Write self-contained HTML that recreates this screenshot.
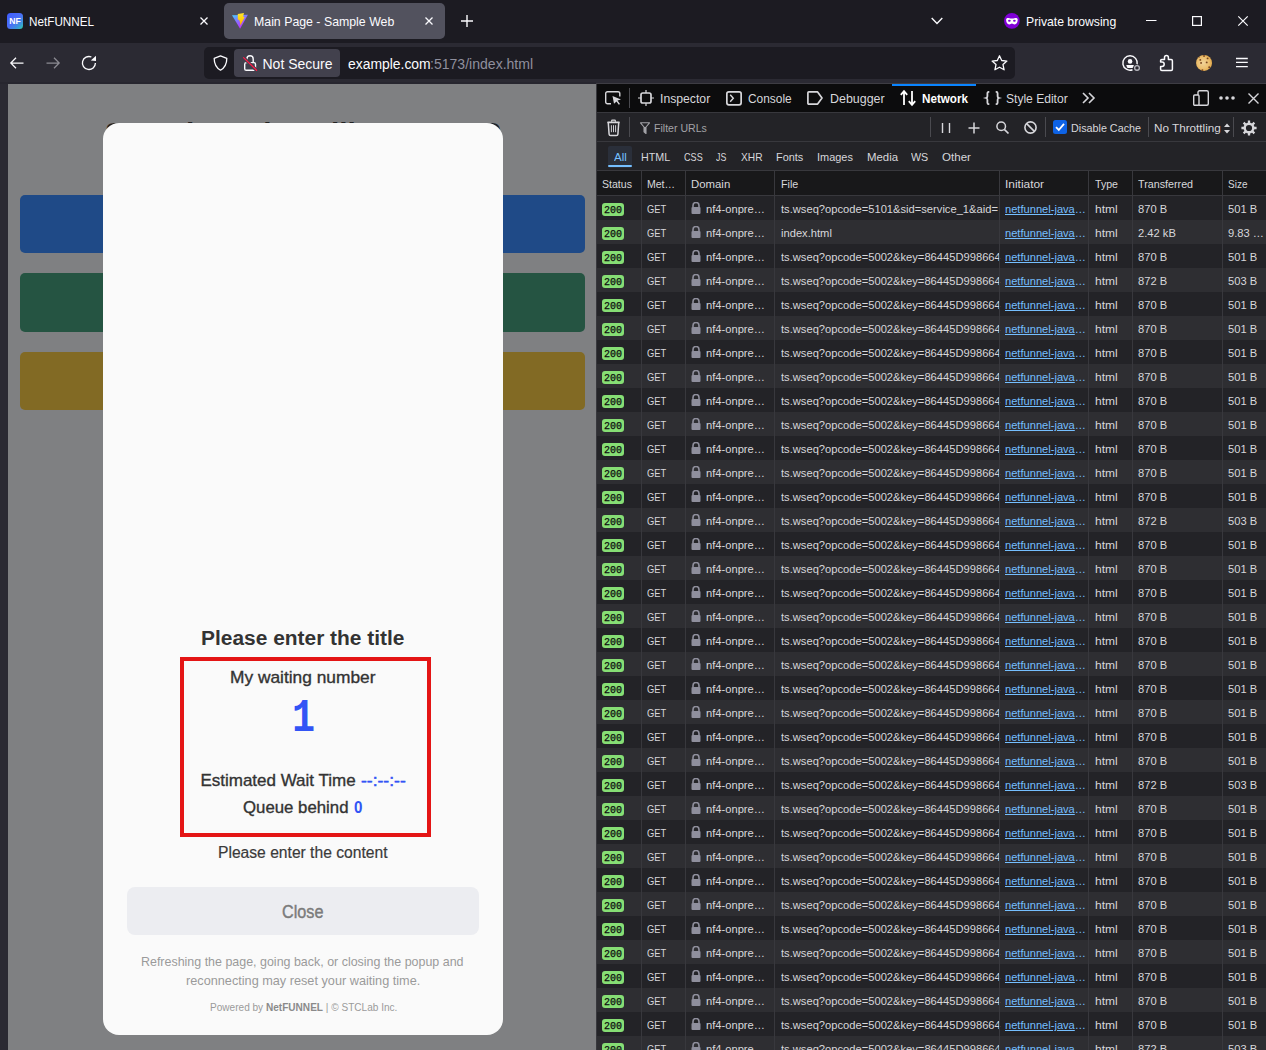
<!DOCTYPE html>
<html><head><meta charset="utf-8">
<style>
*{margin:0;padding:0;box-sizing:border-box}
html,body{width:1266px;height:1050px;overflow:hidden;background:#1c1b22;font-family:"Liberation Sans",sans-serif}
.a{position:absolute}
.t{position:absolute;white-space:nowrap;line-height:1;transform-origin:0 0;z-index:5}
svg.a{overflow:visible;z-index:4}
/* chrome */
#tabs{left:0;top:0;width:1266px;height:43px;background:#1c1b22}
#nav{left:0;top:43px;width:1266px;height:41px;background:#2b2a33}
#leftedge{left:0;top:84px;width:8px;height:966px;background:#2b2a33}
.seltab{left:224px;top:3px;width:221px;height:36px;background:#52525e;border-radius:5px}
#url{left:204px;top:47px;width:811px;height:32px;background:#1c1b22;border-radius:5px}
#chip{left:234px;top:49px;width:106px;height:28px;background:#42414d;border-radius:4px}
/* viewport */
#vp{left:8px;top:84px;width:588px;height:966px;background:#7f8082;overflow:hidden}
.pbtn{position:absolute;left:12px;width:565px;height:58px;border-radius:5px}
#modal{left:95px;top:39px;width:400px;height:912px;background:#fafafa;border-radius:16px}
#redbox{left:180px;top:657px;width:251px;height:180px;border:4px solid #e41515;z-index:3}
#closebtn{left:127px;top:887px;width:352px;height:48px;background:#ecedf1;border-radius:8px}
#hiddenh{left:97px;top:33.5px;font:bold 32px/1 "Liberation Sans";color:#222;white-space:nowrap;transform:scaleX(0.93);transform-origin:0 0}
/* devtools */
#dt{left:596px;top:84px;width:670px;height:966px;background:#1c1b22;overflow:hidden}
#dt .bl{left:0;top:0;width:1px;height:966px;background:#38383d}
#tb1{left:1px;top:0;width:669px;height:28px;background:#0c0c0d}
#tb2{left:1px;top:28px;width:669px;height:29px;background:#232327;border-top:1px solid #38383d}
#tb3{left:1px;top:57px;width:669px;height:29px;background:#232327;border-top:1px solid #38383d}
#hdr{left:1px;top:86px;width:669px;height:26px;background:#18181a;border-top:1px solid #38383d;border-bottom:1px solid #38383d}
#selline{left:892px;top:84px;width:84px;height:2px;background:#0a84ff;z-index:3}
#allbtn{left:608px;top:146px;width:24px;height:22px;background:#2a2f3a;border-radius:2px}
#allline{left:608px;top:165px;width:24px;height:2px;background:#75bfff;border-radius:1px}
.vd{position:absolute;width:1px;background:#4a4a4f}
.r{position:absolute;left:597px;width:669px;height:24px;overflow:hidden}
.odd{background:#232327}
.even{background:#2e2e32}
.r .c{position:absolute;top:6.2px;font-size:11px;line-height:14px;color:#d7d7db;white-space:nowrap;transform-origin:0 0}
.badge{position:absolute;left:5px;top:7px;width:22px;height:13px;background:#86de74;border-radius:3px;font:normal 10px/15px "Liberation Mono",monospace;color:#0c0c0d;-webkit-text-stroke:0.25px #0c0c0d;text-align:center}
.met{left:50px;transform:scaleX(.85)}
.lock{position:absolute;left:94px;top:6px;width:10px;height:12px}
.dom{left:109px;transform:scaleX(1.015)}
.file{left:184px;width:216px;overflow:hidden;transform:scaleX(1.015)}
.init{left:408px;color:#75bfff!important;transform:scaleX(1.01)}.init u{text-decoration:underline}
.typ{left:498px;transform:scaleX(1.09)}
.trn{left:541px;transform:scaleX(1.015)}
.siz{left:631px;transform:scaleX(1.015)}
.coldiv{position:absolute;top:171px;width:1px;height:879px;background:#38383d;z-index:2}
</style></head><body>
<div id="tabs" class="a"></div>
<div class="a seltab"></div>
<div id="nav" class="a"></div>
<div id="url" class="a"></div>
<div id="chip" class="a"></div>
<div id="leftedge" class="a"></div>
<div class="a" style="left:0;top:82px;width:596px;height:2px;background:#27262f"></div>
<div class="a" style="left:596px;top:83px;width:670px;height:1px;background:#3e3d44"></div>

<!-- tab icons -->
<svg class="a" style="left:7px;top:13px" width="16" height="16" viewBox="0 0 16 16">
  <defs><linearGradient id="nfg" x1="0" y1="0" x2="1" y2="1"><stop offset="0" stop-color="#3f5cff"/><stop offset="0.5" stop-color="#4a6ff5"/><stop offset="0.8" stop-color="#3a9ad8"/><stop offset="1" stop-color="#30d6a0"/></linearGradient></defs>
  <rect width="16" height="16" rx="3.5" fill="url(#nfg)"/>
  <text x="8" y="10.9" text-anchor="middle" font-family="Liberation Sans" font-weight="bold" font-size="8.6" fill="#fff">NF</text>
</svg>
<svg class="a" style="left:200px;top:17px" width="8" height="8" viewBox="0 0 8 8"><path d="M0.5 0.5L7.5 7.5M7.5 0.5L0.5 7.5" stroke="#fbfbfe" stroke-width="1.3"/></svg>
<svg class="a" style="left:232px;top:13px" width="16" height="16" viewBox="0 0 16 16">
  <defs><linearGradient id="vg" x1="0" y1="0" x2="0.6" y2="1"><stop offset="0" stop-color="#41d1ff"/><stop offset="0.5" stop-color="#8a6dff"/><stop offset="1" stop-color="#c42cff"/></linearGradient>
  <linearGradient id="vg2" x1="0" y1="0" x2="0" y2="1"><stop offset="0" stop-color="#ffe52e"/><stop offset="0.7" stop-color="#ffc400"/><stop offset="1" stop-color="#ff9a1a"/></linearGradient></defs>
  <path d="M0 2.2L15.9 1.8L8.1 15.7Z" fill="url(#vg)"/>
  <path d="M5.8 1L12 0L11.1 3.5L12.7 4.2L9.7 9.7L8.5 12.7L7.9 8.8L7.2 7L5.8 6.5Z" fill="url(#vg2)"/>
</svg>
<svg class="a" style="left:425px;top:17px" width="8" height="8" viewBox="0 0 8 8"><path d="M0.5 0.5L7.5 7.5M7.5 0.5L0.5 7.5" stroke="#fbfbfe" stroke-width="1.3"/></svg>
<svg class="a" style="left:461px;top:15px" width="12" height="12" viewBox="0 0 12 12"><path d="M6 0V12M0 6H12" stroke="#fbfbfe" stroke-width="1.4"/></svg>
<svg class="a" style="left:931px;top:17px" width="12" height="8" viewBox="0 0 12 8"><path d="M0.7 1L6 6.5L11.3 1" fill="none" stroke="#fbfbfe" stroke-width="1.4"/></svg>
<svg class="a" style="left:1004px;top:13px" width="16" height="16" viewBox="0 0 16 16"><circle cx="7.9" cy="7.9" r="7.85" fill="#8000d7"/><path d="M2.1 6.6C2.1 5.2 3 4.8 4.5 4.9C6 5 7 5.6 7.9 5.6C8.8 5.6 9.8 5 11.3 4.9C12.8 4.8 13.7 5.2 13.7 6.6C13.7 9.5 12.5 11.4 10.6 11.4C9.3 11.4 8.8 10.4 7.9 10.4C7 10.4 6.5 11.4 5.2 11.4C3.3 11.4 2.1 9.5 2.1 6.6Z" fill="#fff"/><ellipse cx="5.4" cy="7.7" rx="1.35" ry="0.95" fill="#8000d7"/><ellipse cx="10.4" cy="7.7" rx="1.35" ry="0.95" fill="#8000d7"/></svg>
<svg class="a" style="left:1145.5px;top:20px" width="11" height="2" viewBox="0 0 11 2"><path d="M0 0.5H10.5" stroke="#fbfbfe" stroke-width="1"/></svg>
<svg class="a" style="left:1192px;top:16px" width="10" height="10" viewBox="0 0 10 10"><rect x="0.6" y="0.6" width="8.8" height="8.8" fill="none" stroke="#fbfbfe" stroke-width="1.2"/></svg>
<svg class="a" style="left:1238px;top:16px" width="10" height="10" viewBox="0 0 10 10"><path d="M0.3 0.3L9.7 9.7M9.7 0.3L0.3 9.7" stroke="#fbfbfe" stroke-width="1.2"/></svg>

<!-- nav icons -->
<svg class="a" style="left:10px;top:57px" width="14" height="12" viewBox="0 0 14 12"><path d="M13.5 6H1M6 0.7L0.8 6L6 11.3" fill="none" stroke="#fbfbfe" stroke-width="1.25"/></svg>
<svg class="a" style="left:46px;top:57px" width="14" height="12" viewBox="0 0 14 12"><path d="M0.5 6H13M8 0.7L13.2 6L8 11.3" fill="none" stroke="#8c8b93" stroke-width="1.25"/></svg>
<svg class="a" style="left:81px;top:55px" width="16" height="16" viewBox="0 0 16 16"><path d="M10.4 2.0A6.5 6.5 0 1 0 14.4 8" fill="none" stroke="#fbfbfe" stroke-width="1.35"/><path d="M9.8 5.6L15 0.8V6Z" fill="#fbfbfe"/></svg>
<svg class="a" style="left:213px;top:55px" width="15" height="16" viewBox="0 0 15 16"><path d="M7.5 0.8L13.8 3.4C13.8 9 11.5 12.8 7.5 15.2C3.5 12.8 1.2 9 1.2 3.4Z" fill="none" stroke="#fbfbfe" stroke-width="1.3" stroke-linejoin="round"/></svg>
<svg class="a" style="left:243px;top:55px" width="14" height="17" viewBox="0 0 14 17"><path d="M3.9 7.3V3.9A3.15 3.15 0 0 1 10.2 3.9V7.3" fill="none" stroke="#fbfbfe" stroke-width="1.4"/><rect x="1.7" y="7.6" width="10.8" height="7.7" rx="1.6" fill="none" stroke="#fbfbfe" stroke-width="1.4"/><path d="M0.3 2.4L13.8 15.5" stroke="#42414d" stroke-width="3.2"/><path d="M0.5 2.6L13.6 15.3" stroke="#ff1a47" stroke-width="1.3" stroke-linecap="round"/></svg>
<svg class="a" style="left:991px;top:55px" width="17" height="16" viewBox="0 0 17 16"><path d="M8.5 0.8L10.7 5.5L15.9 6.1L12 9.6L13.1 14.8L8.5 12.2L3.9 14.8L5 9.6L1.1 6.1L6.3 5.5Z" fill="none" stroke="#fbfbfe" stroke-width="1.3" stroke-linejoin="round"/></svg>
<svg class="a" style="left:1121px;top:54px" width="19" height="17" viewBox="0 0 19 17"><path d="M11.51 15.77A7.2 7.2 0 1 1 16.14 10.25" fill="none" stroke="#fbfbfe" stroke-width="1.45"/><circle cx="9.05" cy="7.4" r="2.3" fill="#fbfbfe"/><path d="M5.2 11H12.9L12.1 13.3Q11.9 13.9 11.2 13.9H6.9Q6.2 13.9 6 13.3Z" fill="#fbfbfe"/><circle cx="16" cy="13.9" r="2.35" fill="none" stroke="#b9b9c0" stroke-width="1.3"/></svg>
<svg class="a" style="left:1159px;top:54px" width="15" height="18" viewBox="0 0 15 18"><path d="M5.5 5.5V3.4A1.95 1.95 0 0 1 9.4 3.4V5.5H12.2A1.2 1.2 0 0 1 13.4 6.7V15.2A1.2 1.2 0 0 1 12.2 16.4H2.8A1.2 1.2 0 0 1 1.6 15.2V12.5H3A2.2 2.2 0 0 0 3 8.1H1.6V6.7A1.2 1.2 0 0 1 2.8 5.5Z" fill="none" stroke="#fbfbfe" stroke-width="1.5" stroke-linejoin="round"/></svg>
<svg class="a" style="left:1195px;top:54px" width="18" height="18" viewBox="0 0 18 18"><defs><radialGradient id="ck" cx="0.45" cy="0.5" r="0.55"><stop offset="0" stop-color="#f1d49a"/><stop offset="0.7" stop-color="#ebbd6c"/><stop offset="1" stop-color="#e0a648"/></radialGradient></defs><circle cx="9.05" cy="8.9" r="8" fill="url(#ck)"/><circle cx="9.05" cy="2" r="0.95" fill="#7a4620"/><circle cx="12.6" cy="4.4" r="0.95" fill="#7a4620"/><circle cx="5.3" cy="5.9" r="0.95" fill="#7a4620"/><circle cx="6.1" cy="8.9" r="0.95" fill="#7a4620"/><circle cx="11.7" cy="8.4" r="0.95" fill="#7a4620"/><circle cx="14.2" cy="13.3" r="0.95" fill="#7a4620"/><circle cx="7.4" cy="16.1" r="0.95" fill="#7a4620"/><circle cx="4.1" cy="3.2" r="0.55" fill="#7a4620"/></svg>
<svg class="a" style="left:1236px;top:57px" width="12" height="11" viewBox="0 0 12 11"><path d="M0 1.5H11.8M0 5.4H11.8M0 9.6H11.8" stroke="#fbfbfe" stroke-width="1.3"/></svg>

<div id="vp" class="a">
  <div id="hiddenh" class="a">Sample Web Mailing IG NFR</div>
  <div class="pbtn" style="top:111px;background:#1f4a87"></div>
  <div class="pbtn" style="top:189px;height:59px;background:#255442"></div>
  <div class="pbtn" style="top:268px;height:58px;background:#826a24"></div>
  <div id="modal" class="a"></div>
</div>
<div id="redbox" class="a"></div>
<div id="closebtn" class="a"></div>
<!-- big number 1 -->
<div class="t" style="left:292px;top:695.5px;font:bold 46px/1 'Liberation Mono',monospace;color:#3254f5;transform:scaleX(0.834)">1</div>
<div class="t" style="left:209.5px;top:1002px;font-size:11px;color:#9a9a9a;transform:scaleX(0.915)">Powered by <b style="color:#8a8a8a">NetFUNNEL</b> | © STCLab Inc.</div>

<div id="dt" class="a">
  <div class="a bl"></div>
  <div id="tb1" class="a"></div>
  <div id="tb2" class="a"></div>
  <div id="tb3" class="a"></div>
  <div id="hdr" class="a"></div>
</div>
<div id="selline" class="a"></div>
<div id="allbtn" class="a"></div>
<div id="allline" class="a"></div>
<!-- toolbar dividers -->
<div class="vd" style="left:629px;top:88px;height:20px"></div>
<div class="vd" style="left:629px;top:117px;height:20px"></div>
<div class="vd" style="left:930px;top:117px;height:20px"></div>
<div class="vd" style="left:1045px;top:117px;height:20px"></div>
<div class="vd" style="left:1148px;top:117px;height:20px"></div>
<div class="vd" style="left:1233px;top:117px;height:20px"></div>

<!-- devtools icons -->
<svg class="a" style="left:605px;top:91px" width="17" height="14" viewBox="0 0 17 14"><path d="M6 12.8H2.5A1.8 1.8 0 0 1 0.7 11V2.5A1.8 1.8 0 0 1 2.5 0.7H13A1.8 1.8 0 0 1 14.8 2.5V5.5" fill="none" stroke="#d7d7db" stroke-width="1.4"/><path d="M7.5 5L16 8.5L12.5 9.5L15 13L13.8 13.8L11.5 10.5L9 12.8Z" fill="#d7d7db"/></svg>
<svg class="a" style="left:638px;top:90px" width="16" height="16" viewBox="0 0 16 16"><rect x="3" y="3" width="10" height="10" rx="1.8" fill="none" stroke="#d7d7db" stroke-width="1.7"/><path d="M8 0V3M8 13V16M0 8H3M13 8H16" stroke="#d7d7db" stroke-width="1.2"/></svg>
<svg class="a" style="left:726px;top:90.5px" width="16" height="15" viewBox="0 0 16 15"><rect x="0.85" y="0.85" width="14.3" height="13" rx="2" fill="none" stroke="#d7d7db" stroke-width="1.7"/><path d="M4.2 3.8L7.3 7.3L4.2 10.8" fill="none" stroke="#d7d7db" stroke-width="1.4"/></svg>
<svg class="a" style="left:807px;top:91px" width="16" height="14" viewBox="0 0 16 14"><path d="M1.8 0.9H10.6L15 7L10.6 13.1H1.8A0.9 0.9 0 0 1 0.9 12.2V1.8A0.9 0.9 0 0 1 1.8 0.9Z" fill="none" stroke="#d7d7db" stroke-width="1.7" stroke-linejoin="round"/></svg>
<svg class="a" style="left:900px;top:90px" width="16" height="16" viewBox="0 0 16 16"><path d="M4 15V1.5M0.8 4.8L4 1.2L7.2 4.8M12 1V14.5M8.8 11.2L12 14.8L15.2 11.2" fill="none" stroke="#ffffff" stroke-width="1.8"/></svg>
<svg class="a" style="left:984.5px;top:91px" width="15" height="14" viewBox="0 0 15 14"><path d="M4.3 0.9H3.6C2.8 0.9 2.4 1.4 2.4 2.2V5.2C2.4 6.1 2 6.7 1 7C2 7.3 2.4 7.9 2.4 8.8V11.8C2.4 12.6 2.8 13.1 3.6 13.1H4.3M10.7 0.9H11.4C12.2 0.9 12.6 1.4 12.6 2.2V5.2C12.6 6.1 13 6.7 14 7C13 7.3 12.6 7.9 12.6 8.8V11.8C12.6 12.6 12.2 13.1 11.4 13.1H10.7" fill="none" stroke="#d7d7db" stroke-width="1.8"/></svg>
<svg class="a" style="left:1082px;top:92px" width="14" height="12" viewBox="0 0 14 12"><path d="M1 1L6 6L1 11M7 1L12 6L7 11" fill="none" stroke="#d7d7db" stroke-width="1.6"/></svg>
<svg class="a" style="left:1193px;top:90px" width="16" height="16" viewBox="0 0 16 16"><rect x="5" y="0.7" width="10.3" height="14.6" rx="1.5" fill="none" stroke="#d7d7db" stroke-width="1.4"/><rect x="0.7" y="5" width="5.3" height="10.3" rx="1" fill="#0c0c0d" stroke="#d7d7db" stroke-width="1.4"/></svg>
<svg class="a" style="left:1219px;top:96px" width="16" height="4" viewBox="0 0 16 4"><circle cx="2" cy="2" r="1.8" fill="#d7d7db"/><circle cx="8" cy="2" r="1.8" fill="#d7d7db"/><circle cx="14" cy="2" r="1.8" fill="#d7d7db"/></svg>
<svg class="a" style="left:1248px;top:93px" width="11" height="11" viewBox="0 0 11 11"><path d="M0.5 0.5L10.5 10.5M10.5 0.5L0.5 10.5" stroke="#d7d7db" stroke-width="1.4"/></svg>
<!-- toolbar2 icons -->
<svg class="a" style="left:607px;top:119px" width="13" height="18" viewBox="0 0 13 18"><rect x="0.2" y="2.6" width="12.6" height="1.6" rx="0.6" fill="#d7d7db"/><path d="M4.6 2.8V1.9Q4.6 1.1 5.4 1.1H7.6Q8.4 1.1 8.4 1.9V2.8" fill="none" stroke="#d7d7db" stroke-width="1.2"/><path d="M1.3 4L2.1 15.3Q2.2 16.6 3.6 16.6H9.4Q10.8 16.6 10.9 15.3L11.7 4" fill="none" stroke="#d7d7db" stroke-width="1.5"/><path d="M4.4 6.2V13.2M6.5 6.2V13.2M8.6 6.2V13.2" stroke="#d7d7db" stroke-width="0.95"/></svg>
<svg class="a" style="left:640px;top:122px" width="10" height="12" viewBox="0 0 10 12"><path d="M0.5 0.8H9.5L6 5V11.5L4 9.8V5Z" fill="none" stroke="#a3a3a8" stroke-width="1.1" stroke-linejoin="round"/><path d="M4 5V9.8L6 11.5V5" fill="#a3a3a8"/></svg>
<svg class="a" style="left:941px;top:122px" width="10" height="12" viewBox="0 0 10 12"><path d="M1.5 1V11M8.5 1V11" stroke="#d7d7db" stroke-width="1.4"/></svg>
<svg class="a" style="left:968px;top:122px" width="12" height="12" viewBox="0 0 12 12"><path d="M6 0.5V11.5M0.5 6H11.5" stroke="#d7d7db" stroke-width="1.5"/></svg>
<svg class="a" style="left:996px;top:121px" width="13" height="13" viewBox="0 0 13 13"><circle cx="5.2" cy="5.2" r="4.3" fill="none" stroke="#d7d7db" stroke-width="1.5"/><path d="M8.3 8.3L12.5 12.5" stroke="#d7d7db" stroke-width="1.7"/></svg>
<svg class="a" style="left:1024px;top:121px" width="13" height="13" viewBox="0 0 13 13"><circle cx="6.5" cy="6.5" r="5.6" fill="none" stroke="#d7d7db" stroke-width="1.6"/><path d="M2.6 2.6L10.4 10.4" stroke="#d7d7db" stroke-width="1.6"/></svg>
<svg class="a" style="left:1053px;top:120px" width="14" height="14" viewBox="0 0 14 14"><rect width="14" height="14" rx="2.5" fill="#0e63e6"/><path d="M3 7.2L5.8 10L11 3.8" fill="none" stroke="#fff" stroke-width="1.8"/></svg>
<svg class="a" style="left:1224px;top:123px" width="6" height="11" viewBox="0 0 6 11"><path d="M0 4L3 0.5L6 4ZM0 7L3 10.5L6 7Z" fill="#d7d7db"/></svg>
<svg class="a" style="left:1241px;top:120px" width="16" height="16" viewBox="0 0 16 16"><path d="M13.00 8.00L15.60 8.00M11.54 11.54L13.37 13.37M8.00 13.00L8.00 15.60M4.46 11.54L2.63 13.37M3.00 8.00L0.40 8.00M4.46 4.46L2.63 2.63M8.00 3.00L8.00 0.40M11.54 4.46L13.37 2.63" stroke="#d7d7db" stroke-width="2.3"/><circle cx="8" cy="8" r="4.3" fill="none" stroke="#d7d7db" stroke-width="2.4"/></svg>

<span class="t" id="t0" style="left:28.6px;top:15.0px;font-size:13px;font-weight:400;color:#fbfbfe;font-family:'Liberation Sans';transform:scaleX(0.9017);">NetFUNNEL</span>
<span class="t" id="t1" style="left:253.5px;top:15.0px;font-size:13px;font-weight:400;color:#fbfbfe;font-family:'Liberation Sans';transform:scaleX(0.9485);">Main Page - Sample Web</span>
<span class="t" id="t2" style="left:1026.3px;top:15.0px;font-size:13px;font-weight:400;color:#fbfbfe;font-family:'Liberation Sans';transform:scaleX(0.9382);">Private browsing</span>
<span class="t" id="t3" style="left:262.5px;top:57.3px;font-size:14px;font-weight:400;color:#fbfbfe;font-family:'Liberation Sans';">Not Secure</span>
<span class="t" id="t4" style="left:348.2px;top:56.7px;font-size:14px;font-weight:400;color:#fbfbfe;font-family:'Liberation Sans';transform:scaleX(0.9932);">example.com</span>
<span class="t" id="t5" style="left:430.4px;top:56.7px;font-size:14px;font-weight:400;color:#8f8f9d;font-family:'Liberation Sans';transform:scaleX(1.0036);">:5173/index.html</span>
<span class="t" id="t6" style="left:660.0px;top:92.8px;font-size:12px;font-weight:400;color:#d7d7db;font-family:'Liberation Sans';transform:scaleX(1.0172);">Inspector</span>
<span class="t" id="t7" style="left:747.7px;top:92.8px;font-size:12px;font-weight:400;color:#d7d7db;font-family:'Liberation Sans';transform:scaleX(0.9924);">Console</span>
<span class="t" id="t8" style="left:829.5px;top:92.8px;font-size:12px;font-weight:400;color:#d7d7db;font-family:'Liberation Sans';transform:scaleX(1.0360);">Debugger</span>
<span class="t" id="t9" style="left:921.7px;top:92.8px;font-size:12px;font-weight:700;color:#ffffff;font-family:'Liberation Sans';transform:scaleX(0.9713);">Network</span>
<span class="t" id="t10" style="left:1005.7px;top:92.8px;font-size:12px;font-weight:400;color:#d7d7db;font-family:'Liberation Sans';transform:scaleX(1.0056);">Style Editor</span>
<span class="t" id="t11" style="left:654.0px;top:122.9px;font-size:11px;font-weight:400;color:#a3a3a8;font-family:'Liberation Sans';transform:scaleX(0.9594);">Filter URLs</span>
<span class="t" id="t12" style="left:1070.7px;top:123.0px;font-size:11px;font-weight:400;color:#d7d7db;font-family:'Liberation Sans';transform:scaleX(0.9782);">Disable Cache</span>
<span class="t" id="t13" style="left:1153.7px;top:123.0px;font-size:11px;font-weight:400;color:#d7d7db;font-family:'Liberation Sans';transform:scaleX(1.0645);">No Throttling</span>
<span class="t" id="t14" style="left:614.0px;top:151.6px;font-size:11px;font-weight:400;color:#75bfff;font-family:'Liberation Sans';transform:scaleX(1.0482);">All</span>
<span class="t" id="t15" style="left:640.7px;top:151.6px;font-size:11px;font-weight:400;color:#d7d7db;font-family:'Liberation Sans';transform:scaleX(0.9778);">HTML</span>
<span class="t" id="t16" style="left:683.7px;top:151.6px;font-size:11px;font-weight:400;color:#d7d7db;font-family:'Liberation Sans';transform:scaleX(0.8271);">CSS</span>
<span class="t" id="t17" style="left:716.4px;top:151.6px;font-size:11px;font-weight:400;color:#d7d7db;font-family:'Liberation Sans';transform:scaleX(0.8020);">JS</span>
<span class="t" id="t18" style="left:740.5px;top:151.6px;font-size:11px;font-weight:400;color:#d7d7db;font-family:'Liberation Sans';transform:scaleX(0.9281);">XHR</span>
<span class="t" id="t19" style="left:776.0px;top:151.6px;font-size:11px;font-weight:400;color:#d7d7db;font-family:'Liberation Sans';transform:scaleX(0.9883);">Fonts</span>
<span class="t" id="t20" style="left:816.9px;top:151.6px;font-size:11px;font-weight:400;color:#d7d7db;font-family:'Liberation Sans';transform:scaleX(0.9950);">Images</span>
<span class="t" id="t21" style="left:866.5px;top:151.6px;font-size:11px;font-weight:400;color:#d7d7db;font-family:'Liberation Sans';transform:scaleX(1.0350);">Media</span>
<span class="t" id="t22" style="left:911.0px;top:151.6px;font-size:11px;font-weight:400;color:#d7d7db;font-family:'Liberation Sans';transform:scaleX(0.9748);">WS</span>
<span class="t" id="t23" style="left:941.6px;top:151.6px;font-size:11px;font-weight:400;color:#d7d7db;font-family:'Liberation Sans';transform:scaleX(1.0512);">Other</span>
<span class="t" id="t24" style="left:602.0px;top:178.7px;font-size:11px;font-weight:400;color:#d7d7db;font-family:'Liberation Sans';transform:scaleX(0.9613);">Status</span>
<span class="t" id="t25" style="left:646.9px;top:178.7px;font-size:11px;font-weight:400;color:#d7d7db;font-family:'Liberation Sans';transform:scaleX(0.9569);">Met…</span>
<span class="t" id="t26" style="left:691.3px;top:178.7px;font-size:11px;font-weight:400;color:#d7d7db;font-family:'Liberation Sans';transform:scaleX(1.0346);">Domain</span>
<span class="t" id="t27" style="left:780.5px;top:178.7px;font-size:11px;font-weight:400;color:#d7d7db;font-family:'Liberation Sans';transform:scaleX(0.9748);">File</span>
<span class="t" id="t28" style="left:1004.5px;top:178.7px;font-size:11px;font-weight:400;color:#d7d7db;font-family:'Liberation Sans';transform:scaleX(1.0821);">Initiator</span>
<span class="t" id="t29" style="left:1094.5px;top:178.7px;font-size:11px;font-weight:400;color:#d7d7db;font-family:'Liberation Sans';transform:scaleX(0.9632);">Type</span>
<span class="t" id="t30" style="left:1138.0px;top:178.7px;font-size:11px;font-weight:400;color:#d7d7db;font-family:'Liberation Sans';transform:scaleX(0.9758);">Transferred</span>
<span class="t" id="t31" style="left:1228.0px;top:178.7px;font-size:11px;font-weight:400;color:#d7d7db;font-family:'Liberation Sans';transform:scaleX(0.9088);">Size</span>
<span class="t" id="t32" style="left:201.0px;top:628.1px;font-size:20px;font-weight:700;color:#333333;font-family:'Liberation Sans';transform:scaleX(1.0462);">Please enter the title</span>
<span class="t" id="t33" style="left:230.0px;top:668.8px;font-size:17px;font-weight:400;color:#333333;font-family:'Liberation Sans';transform:scaleX(1.0199);-webkit-text-stroke:0.35px #333;">My waiting number</span>
<span class="t" id="t34" style="left:200.4px;top:772.1px;font-size:17px;font-weight:400;color:#333333;font-family:'Liberation Sans';-webkit-text-stroke:0.35px #333;">Estimated Wait Time</span>
<span class="t" id="t35" style="left:360.8px;top:772.1px;font-size:17px;font-weight:400;color:#3254f5;font-family:'Liberation Sans';transform:scaleX(1.0298);-webkit-text-stroke:0.5px #3254f5;">--:--:--</span>
<span class="t" id="t36" style="left:243.0px;top:799.4px;font-size:17px;font-weight:400;color:#333333;font-family:'Liberation Sans';transform:scaleX(0.9875);-webkit-text-stroke:0.35px #333;">Queue behind</span>
<span class="t" id="t37" style="left:354.0px;top:799.4px;font-size:17px;font-weight:700;color:#3254f5;font-family:'Liberation Sans';transform:scaleX(0.8920);">0</span>
<span class="t" id="t38" style="left:218.0px;top:845.1px;font-size:16px;font-weight:400;color:#3a3a3a;font-family:'Liberation Sans';transform:scaleX(0.9771);-webkit-text-stroke:0.2px #3a3a3a;">Please enter the content</span>
<span class="t" id="t39" style="left:282.0px;top:903.1px;font-size:18px;font-weight:400;color:#7b7b7b;font-family:'Liberation Sans';transform:scaleX(0.9005);-webkit-text-stroke:0.4px #7b7b7b;">Close</span>
<span class="t" id="t40" style="left:141.4px;top:954.8px;font-size:13px;font-weight:400;color:#9a9a9a;font-family:'Liberation Sans';transform:scaleX(0.9575);">Refreshing the page, going back, or closing the popup and</span>
<span class="t" id="t41" style="left:185.8px;top:973.8px;font-size:13px;font-weight:400;color:#9a9a9a;font-family:'Liberation Sans';transform:scaleX(0.9766);">reconnecting may reset your waiting time.</span>
<!-- column dividers -->
<div class="coldiv" style="left:641px"></div>
<div class="coldiv" style="left:685px"></div>
<div class="coldiv" style="left:774px"></div>
<div class="coldiv" style="left:999px"></div>
<div class="coldiv" style="left:1088px"></div>
<div class="coldiv" style="left:1132px"></div>
<div class="coldiv" style="left:1222px"></div>
<div class="r odd" style="top:196px"><span class="badge">200</span><span class="c met">GET</span><svg class="lock" viewBox="0 0 10 12"><path d="M2 5V3.5a3 3 0 0 1 6 0V5" fill="none" stroke="#8f8f9d" stroke-width="1.6"/><rect x="0.5" y="5" width="9" height="7" rx="1" fill="#8f8f9d"/></svg><span class="c dom">nf4-onpre…</span><span class="c file">ts.wseq?opcode=5101&amp;sid=service_1&amp;aid=</span><span class="c init"><u>netfunnel-java</u>…</span><span class="c typ">html</span><span class="c trn">870 B</span><span class="c siz">501 B</span></div>
<div class="r even" style="top:220px"><span class="badge">200</span><span class="c met">GET</span><svg class="lock" viewBox="0 0 10 12"><path d="M2 5V3.5a3 3 0 0 1 6 0V5" fill="none" stroke="#8f8f9d" stroke-width="1.6"/><rect x="0.5" y="5" width="9" height="7" rx="1" fill="#8f8f9d"/></svg><span class="c dom">nf4-onpre…</span><span class="c file">index.html</span><span class="c init"><u>netfunnel-java</u>…</span><span class="c typ">html</span><span class="c trn">2.42 kB</span><span class="c siz">9.83 …</span></div>
<div class="r odd" style="top:244px"><span class="badge">200</span><span class="c met">GET</span><svg class="lock" viewBox="0 0 10 12"><path d="M2 5V3.5a3 3 0 0 1 6 0V5" fill="none" stroke="#8f8f9d" stroke-width="1.6"/><rect x="0.5" y="5" width="9" height="7" rx="1" fill="#8f8f9d"/></svg><span class="c dom">nf4-onpre…</span><span class="c file">ts.wseq?opcode=5002&amp;key=86445D998664</span><span class="c init"><u>netfunnel-java</u>…</span><span class="c typ">html</span><span class="c trn">870 B</span><span class="c siz">501 B</span></div>
<div class="r even" style="top:268px"><span class="badge">200</span><span class="c met">GET</span><svg class="lock" viewBox="0 0 10 12"><path d="M2 5V3.5a3 3 0 0 1 6 0V5" fill="none" stroke="#8f8f9d" stroke-width="1.6"/><rect x="0.5" y="5" width="9" height="7" rx="1" fill="#8f8f9d"/></svg><span class="c dom">nf4-onpre…</span><span class="c file">ts.wseq?opcode=5002&amp;key=86445D998664</span><span class="c init"><u>netfunnel-java</u>…</span><span class="c typ">html</span><span class="c trn">872 B</span><span class="c siz">503 B</span></div>
<div class="r odd" style="top:292px"><span class="badge">200</span><span class="c met">GET</span><svg class="lock" viewBox="0 0 10 12"><path d="M2 5V3.5a3 3 0 0 1 6 0V5" fill="none" stroke="#8f8f9d" stroke-width="1.6"/><rect x="0.5" y="5" width="9" height="7" rx="1" fill="#8f8f9d"/></svg><span class="c dom">nf4-onpre…</span><span class="c file">ts.wseq?opcode=5002&amp;key=86445D998664</span><span class="c init"><u>netfunnel-java</u>…</span><span class="c typ">html</span><span class="c trn">870 B</span><span class="c siz">501 B</span></div>
<div class="r even" style="top:316px"><span class="badge">200</span><span class="c met">GET</span><svg class="lock" viewBox="0 0 10 12"><path d="M2 5V3.5a3 3 0 0 1 6 0V5" fill="none" stroke="#8f8f9d" stroke-width="1.6"/><rect x="0.5" y="5" width="9" height="7" rx="1" fill="#8f8f9d"/></svg><span class="c dom">nf4-onpre…</span><span class="c file">ts.wseq?opcode=5002&amp;key=86445D998664</span><span class="c init"><u>netfunnel-java</u>…</span><span class="c typ">html</span><span class="c trn">870 B</span><span class="c siz">501 B</span></div>
<div class="r odd" style="top:340px"><span class="badge">200</span><span class="c met">GET</span><svg class="lock" viewBox="0 0 10 12"><path d="M2 5V3.5a3 3 0 0 1 6 0V5" fill="none" stroke="#8f8f9d" stroke-width="1.6"/><rect x="0.5" y="5" width="9" height="7" rx="1" fill="#8f8f9d"/></svg><span class="c dom">nf4-onpre…</span><span class="c file">ts.wseq?opcode=5002&amp;key=86445D998664</span><span class="c init"><u>netfunnel-java</u>…</span><span class="c typ">html</span><span class="c trn">870 B</span><span class="c siz">501 B</span></div>
<div class="r even" style="top:364px"><span class="badge">200</span><span class="c met">GET</span><svg class="lock" viewBox="0 0 10 12"><path d="M2 5V3.5a3 3 0 0 1 6 0V5" fill="none" stroke="#8f8f9d" stroke-width="1.6"/><rect x="0.5" y="5" width="9" height="7" rx="1" fill="#8f8f9d"/></svg><span class="c dom">nf4-onpre…</span><span class="c file">ts.wseq?opcode=5002&amp;key=86445D998664</span><span class="c init"><u>netfunnel-java</u>…</span><span class="c typ">html</span><span class="c trn">870 B</span><span class="c siz">501 B</span></div>
<div class="r odd" style="top:388px"><span class="badge">200</span><span class="c met">GET</span><svg class="lock" viewBox="0 0 10 12"><path d="M2 5V3.5a3 3 0 0 1 6 0V5" fill="none" stroke="#8f8f9d" stroke-width="1.6"/><rect x="0.5" y="5" width="9" height="7" rx="1" fill="#8f8f9d"/></svg><span class="c dom">nf4-onpre…</span><span class="c file">ts.wseq?opcode=5002&amp;key=86445D998664</span><span class="c init"><u>netfunnel-java</u>…</span><span class="c typ">html</span><span class="c trn">870 B</span><span class="c siz">501 B</span></div>
<div class="r even" style="top:412px"><span class="badge">200</span><span class="c met">GET</span><svg class="lock" viewBox="0 0 10 12"><path d="M2 5V3.5a3 3 0 0 1 6 0V5" fill="none" stroke="#8f8f9d" stroke-width="1.6"/><rect x="0.5" y="5" width="9" height="7" rx="1" fill="#8f8f9d"/></svg><span class="c dom">nf4-onpre…</span><span class="c file">ts.wseq?opcode=5002&amp;key=86445D998664</span><span class="c init"><u>netfunnel-java</u>…</span><span class="c typ">html</span><span class="c trn">870 B</span><span class="c siz">501 B</span></div>
<div class="r odd" style="top:436px"><span class="badge">200</span><span class="c met">GET</span><svg class="lock" viewBox="0 0 10 12"><path d="M2 5V3.5a3 3 0 0 1 6 0V5" fill="none" stroke="#8f8f9d" stroke-width="1.6"/><rect x="0.5" y="5" width="9" height="7" rx="1" fill="#8f8f9d"/></svg><span class="c dom">nf4-onpre…</span><span class="c file">ts.wseq?opcode=5002&amp;key=86445D998664</span><span class="c init"><u>netfunnel-java</u>…</span><span class="c typ">html</span><span class="c trn">870 B</span><span class="c siz">501 B</span></div>
<div class="r even" style="top:460px"><span class="badge">200</span><span class="c met">GET</span><svg class="lock" viewBox="0 0 10 12"><path d="M2 5V3.5a3 3 0 0 1 6 0V5" fill="none" stroke="#8f8f9d" stroke-width="1.6"/><rect x="0.5" y="5" width="9" height="7" rx="1" fill="#8f8f9d"/></svg><span class="c dom">nf4-onpre…</span><span class="c file">ts.wseq?opcode=5002&amp;key=86445D998664</span><span class="c init"><u>netfunnel-java</u>…</span><span class="c typ">html</span><span class="c trn">870 B</span><span class="c siz">501 B</span></div>
<div class="r odd" style="top:484px"><span class="badge">200</span><span class="c met">GET</span><svg class="lock" viewBox="0 0 10 12"><path d="M2 5V3.5a3 3 0 0 1 6 0V5" fill="none" stroke="#8f8f9d" stroke-width="1.6"/><rect x="0.5" y="5" width="9" height="7" rx="1" fill="#8f8f9d"/></svg><span class="c dom">nf4-onpre…</span><span class="c file">ts.wseq?opcode=5002&amp;key=86445D998664</span><span class="c init"><u>netfunnel-java</u>…</span><span class="c typ">html</span><span class="c trn">870 B</span><span class="c siz">501 B</span></div>
<div class="r even" style="top:508px"><span class="badge">200</span><span class="c met">GET</span><svg class="lock" viewBox="0 0 10 12"><path d="M2 5V3.5a3 3 0 0 1 6 0V5" fill="none" stroke="#8f8f9d" stroke-width="1.6"/><rect x="0.5" y="5" width="9" height="7" rx="1" fill="#8f8f9d"/></svg><span class="c dom">nf4-onpre…</span><span class="c file">ts.wseq?opcode=5002&amp;key=86445D998664</span><span class="c init"><u>netfunnel-java</u>…</span><span class="c typ">html</span><span class="c trn">872 B</span><span class="c siz">503 B</span></div>
<div class="r odd" style="top:532px"><span class="badge">200</span><span class="c met">GET</span><svg class="lock" viewBox="0 0 10 12"><path d="M2 5V3.5a3 3 0 0 1 6 0V5" fill="none" stroke="#8f8f9d" stroke-width="1.6"/><rect x="0.5" y="5" width="9" height="7" rx="1" fill="#8f8f9d"/></svg><span class="c dom">nf4-onpre…</span><span class="c file">ts.wseq?opcode=5002&amp;key=86445D998664</span><span class="c init"><u>netfunnel-java</u>…</span><span class="c typ">html</span><span class="c trn">870 B</span><span class="c siz">501 B</span></div>
<div class="r even" style="top:556px"><span class="badge">200</span><span class="c met">GET</span><svg class="lock" viewBox="0 0 10 12"><path d="M2 5V3.5a3 3 0 0 1 6 0V5" fill="none" stroke="#8f8f9d" stroke-width="1.6"/><rect x="0.5" y="5" width="9" height="7" rx="1" fill="#8f8f9d"/></svg><span class="c dom">nf4-onpre…</span><span class="c file">ts.wseq?opcode=5002&amp;key=86445D998664</span><span class="c init"><u>netfunnel-java</u>…</span><span class="c typ">html</span><span class="c trn">870 B</span><span class="c siz">501 B</span></div>
<div class="r odd" style="top:580px"><span class="badge">200</span><span class="c met">GET</span><svg class="lock" viewBox="0 0 10 12"><path d="M2 5V3.5a3 3 0 0 1 6 0V5" fill="none" stroke="#8f8f9d" stroke-width="1.6"/><rect x="0.5" y="5" width="9" height="7" rx="1" fill="#8f8f9d"/></svg><span class="c dom">nf4-onpre…</span><span class="c file">ts.wseq?opcode=5002&amp;key=86445D998664</span><span class="c init"><u>netfunnel-java</u>…</span><span class="c typ">html</span><span class="c trn">870 B</span><span class="c siz">501 B</span></div>
<div class="r even" style="top:604px"><span class="badge">200</span><span class="c met">GET</span><svg class="lock" viewBox="0 0 10 12"><path d="M2 5V3.5a3 3 0 0 1 6 0V5" fill="none" stroke="#8f8f9d" stroke-width="1.6"/><rect x="0.5" y="5" width="9" height="7" rx="1" fill="#8f8f9d"/></svg><span class="c dom">nf4-onpre…</span><span class="c file">ts.wseq?opcode=5002&amp;key=86445D998664</span><span class="c init"><u>netfunnel-java</u>…</span><span class="c typ">html</span><span class="c trn">870 B</span><span class="c siz">501 B</span></div>
<div class="r odd" style="top:628px"><span class="badge">200</span><span class="c met">GET</span><svg class="lock" viewBox="0 0 10 12"><path d="M2 5V3.5a3 3 0 0 1 6 0V5" fill="none" stroke="#8f8f9d" stroke-width="1.6"/><rect x="0.5" y="5" width="9" height="7" rx="1" fill="#8f8f9d"/></svg><span class="c dom">nf4-onpre…</span><span class="c file">ts.wseq?opcode=5002&amp;key=86445D998664</span><span class="c init"><u>netfunnel-java</u>…</span><span class="c typ">html</span><span class="c trn">870 B</span><span class="c siz">501 B</span></div>
<div class="r even" style="top:652px"><span class="badge">200</span><span class="c met">GET</span><svg class="lock" viewBox="0 0 10 12"><path d="M2 5V3.5a3 3 0 0 1 6 0V5" fill="none" stroke="#8f8f9d" stroke-width="1.6"/><rect x="0.5" y="5" width="9" height="7" rx="1" fill="#8f8f9d"/></svg><span class="c dom">nf4-onpre…</span><span class="c file">ts.wseq?opcode=5002&amp;key=86445D998664</span><span class="c init"><u>netfunnel-java</u>…</span><span class="c typ">html</span><span class="c trn">870 B</span><span class="c siz">501 B</span></div>
<div class="r odd" style="top:676px"><span class="badge">200</span><span class="c met">GET</span><svg class="lock" viewBox="0 0 10 12"><path d="M2 5V3.5a3 3 0 0 1 6 0V5" fill="none" stroke="#8f8f9d" stroke-width="1.6"/><rect x="0.5" y="5" width="9" height="7" rx="1" fill="#8f8f9d"/></svg><span class="c dom">nf4-onpre…</span><span class="c file">ts.wseq?opcode=5002&amp;key=86445D998664</span><span class="c init"><u>netfunnel-java</u>…</span><span class="c typ">html</span><span class="c trn">870 B</span><span class="c siz">501 B</span></div>
<div class="r even" style="top:700px"><span class="badge">200</span><span class="c met">GET</span><svg class="lock" viewBox="0 0 10 12"><path d="M2 5V3.5a3 3 0 0 1 6 0V5" fill="none" stroke="#8f8f9d" stroke-width="1.6"/><rect x="0.5" y="5" width="9" height="7" rx="1" fill="#8f8f9d"/></svg><span class="c dom">nf4-onpre…</span><span class="c file">ts.wseq?opcode=5002&amp;key=86445D998664</span><span class="c init"><u>netfunnel-java</u>…</span><span class="c typ">html</span><span class="c trn">870 B</span><span class="c siz">501 B</span></div>
<div class="r odd" style="top:724px"><span class="badge">200</span><span class="c met">GET</span><svg class="lock" viewBox="0 0 10 12"><path d="M2 5V3.5a3 3 0 0 1 6 0V5" fill="none" stroke="#8f8f9d" stroke-width="1.6"/><rect x="0.5" y="5" width="9" height="7" rx="1" fill="#8f8f9d"/></svg><span class="c dom">nf4-onpre…</span><span class="c file">ts.wseq?opcode=5002&amp;key=86445D998664</span><span class="c init"><u>netfunnel-java</u>…</span><span class="c typ">html</span><span class="c trn">870 B</span><span class="c siz">501 B</span></div>
<div class="r even" style="top:748px"><span class="badge">200</span><span class="c met">GET</span><svg class="lock" viewBox="0 0 10 12"><path d="M2 5V3.5a3 3 0 0 1 6 0V5" fill="none" stroke="#8f8f9d" stroke-width="1.6"/><rect x="0.5" y="5" width="9" height="7" rx="1" fill="#8f8f9d"/></svg><span class="c dom">nf4-onpre…</span><span class="c file">ts.wseq?opcode=5002&amp;key=86445D998664</span><span class="c init"><u>netfunnel-java</u>…</span><span class="c typ">html</span><span class="c trn">870 B</span><span class="c siz">501 B</span></div>
<div class="r odd" style="top:772px"><span class="badge">200</span><span class="c met">GET</span><svg class="lock" viewBox="0 0 10 12"><path d="M2 5V3.5a3 3 0 0 1 6 0V5" fill="none" stroke="#8f8f9d" stroke-width="1.6"/><rect x="0.5" y="5" width="9" height="7" rx="1" fill="#8f8f9d"/></svg><span class="c dom">nf4-onpre…</span><span class="c file">ts.wseq?opcode=5002&amp;key=86445D998664</span><span class="c init"><u>netfunnel-java</u>…</span><span class="c typ">html</span><span class="c trn">872 B</span><span class="c siz">503 B</span></div>
<div class="r even" style="top:796px"><span class="badge">200</span><span class="c met">GET</span><svg class="lock" viewBox="0 0 10 12"><path d="M2 5V3.5a3 3 0 0 1 6 0V5" fill="none" stroke="#8f8f9d" stroke-width="1.6"/><rect x="0.5" y="5" width="9" height="7" rx="1" fill="#8f8f9d"/></svg><span class="c dom">nf4-onpre…</span><span class="c file">ts.wseq?opcode=5002&amp;key=86445D998664</span><span class="c init"><u>netfunnel-java</u>…</span><span class="c typ">html</span><span class="c trn">870 B</span><span class="c siz">501 B</span></div>
<div class="r odd" style="top:820px"><span class="badge">200</span><span class="c met">GET</span><svg class="lock" viewBox="0 0 10 12"><path d="M2 5V3.5a3 3 0 0 1 6 0V5" fill="none" stroke="#8f8f9d" stroke-width="1.6"/><rect x="0.5" y="5" width="9" height="7" rx="1" fill="#8f8f9d"/></svg><span class="c dom">nf4-onpre…</span><span class="c file">ts.wseq?opcode=5002&amp;key=86445D998664</span><span class="c init"><u>netfunnel-java</u>…</span><span class="c typ">html</span><span class="c trn">870 B</span><span class="c siz">501 B</span></div>
<div class="r even" style="top:844px"><span class="badge">200</span><span class="c met">GET</span><svg class="lock" viewBox="0 0 10 12"><path d="M2 5V3.5a3 3 0 0 1 6 0V5" fill="none" stroke="#8f8f9d" stroke-width="1.6"/><rect x="0.5" y="5" width="9" height="7" rx="1" fill="#8f8f9d"/></svg><span class="c dom">nf4-onpre…</span><span class="c file">ts.wseq?opcode=5002&amp;key=86445D998664</span><span class="c init"><u>netfunnel-java</u>…</span><span class="c typ">html</span><span class="c trn">870 B</span><span class="c siz">501 B</span></div>
<div class="r odd" style="top:868px"><span class="badge">200</span><span class="c met">GET</span><svg class="lock" viewBox="0 0 10 12"><path d="M2 5V3.5a3 3 0 0 1 6 0V5" fill="none" stroke="#8f8f9d" stroke-width="1.6"/><rect x="0.5" y="5" width="9" height="7" rx="1" fill="#8f8f9d"/></svg><span class="c dom">nf4-onpre…</span><span class="c file">ts.wseq?opcode=5002&amp;key=86445D998664</span><span class="c init"><u>netfunnel-java</u>…</span><span class="c typ">html</span><span class="c trn">870 B</span><span class="c siz">501 B</span></div>
<div class="r even" style="top:892px"><span class="badge">200</span><span class="c met">GET</span><svg class="lock" viewBox="0 0 10 12"><path d="M2 5V3.5a3 3 0 0 1 6 0V5" fill="none" stroke="#8f8f9d" stroke-width="1.6"/><rect x="0.5" y="5" width="9" height="7" rx="1" fill="#8f8f9d"/></svg><span class="c dom">nf4-onpre…</span><span class="c file">ts.wseq?opcode=5002&amp;key=86445D998664</span><span class="c init"><u>netfunnel-java</u>…</span><span class="c typ">html</span><span class="c trn">870 B</span><span class="c siz">501 B</span></div>
<div class="r odd" style="top:916px"><span class="badge">200</span><span class="c met">GET</span><svg class="lock" viewBox="0 0 10 12"><path d="M2 5V3.5a3 3 0 0 1 6 0V5" fill="none" stroke="#8f8f9d" stroke-width="1.6"/><rect x="0.5" y="5" width="9" height="7" rx="1" fill="#8f8f9d"/></svg><span class="c dom">nf4-onpre…</span><span class="c file">ts.wseq?opcode=5002&amp;key=86445D998664</span><span class="c init"><u>netfunnel-java</u>…</span><span class="c typ">html</span><span class="c trn">870 B</span><span class="c siz">501 B</span></div>
<div class="r even" style="top:940px"><span class="badge">200</span><span class="c met">GET</span><svg class="lock" viewBox="0 0 10 12"><path d="M2 5V3.5a3 3 0 0 1 6 0V5" fill="none" stroke="#8f8f9d" stroke-width="1.6"/><rect x="0.5" y="5" width="9" height="7" rx="1" fill="#8f8f9d"/></svg><span class="c dom">nf4-onpre…</span><span class="c file">ts.wseq?opcode=5002&amp;key=86445D998664</span><span class="c init"><u>netfunnel-java</u>…</span><span class="c typ">html</span><span class="c trn">870 B</span><span class="c siz">501 B</span></div>
<div class="r odd" style="top:964px"><span class="badge">200</span><span class="c met">GET</span><svg class="lock" viewBox="0 0 10 12"><path d="M2 5V3.5a3 3 0 0 1 6 0V5" fill="none" stroke="#8f8f9d" stroke-width="1.6"/><rect x="0.5" y="5" width="9" height="7" rx="1" fill="#8f8f9d"/></svg><span class="c dom">nf4-onpre…</span><span class="c file">ts.wseq?opcode=5002&amp;key=86445D998664</span><span class="c init"><u>netfunnel-java</u>…</span><span class="c typ">html</span><span class="c trn">870 B</span><span class="c siz">501 B</span></div>
<div class="r even" style="top:988px"><span class="badge">200</span><span class="c met">GET</span><svg class="lock" viewBox="0 0 10 12"><path d="M2 5V3.5a3 3 0 0 1 6 0V5" fill="none" stroke="#8f8f9d" stroke-width="1.6"/><rect x="0.5" y="5" width="9" height="7" rx="1" fill="#8f8f9d"/></svg><span class="c dom">nf4-onpre…</span><span class="c file">ts.wseq?opcode=5002&amp;key=86445D998664</span><span class="c init"><u>netfunnel-java</u>…</span><span class="c typ">html</span><span class="c trn">870 B</span><span class="c siz">501 B</span></div>
<div class="r odd" style="top:1012px"><span class="badge">200</span><span class="c met">GET</span><svg class="lock" viewBox="0 0 10 12"><path d="M2 5V3.5a3 3 0 0 1 6 0V5" fill="none" stroke="#8f8f9d" stroke-width="1.6"/><rect x="0.5" y="5" width="9" height="7" rx="1" fill="#8f8f9d"/></svg><span class="c dom">nf4-onpre…</span><span class="c file">ts.wseq?opcode=5002&amp;key=86445D998664</span><span class="c init"><u>netfunnel-java</u>…</span><span class="c typ">html</span><span class="c trn">870 B</span><span class="c siz">501 B</span></div>
<div class="r even" style="top:1036px"><span class="badge">200</span><span class="c met">GET</span><svg class="lock" viewBox="0 0 10 12"><path d="M2 5V3.5a3 3 0 0 1 6 0V5" fill="none" stroke="#8f8f9d" stroke-width="1.6"/><rect x="0.5" y="5" width="9" height="7" rx="1" fill="#8f8f9d"/></svg><span class="c dom">nf4-onpre…</span><span class="c file">ts.wseq?opcode=5002&amp;key=86445D998664</span><span class="c init"><u>netfunnel-java</u>…</span><span class="c typ">html</span><span class="c trn">872 B</span><span class="c siz">503 B</span></div>
</body></html>
